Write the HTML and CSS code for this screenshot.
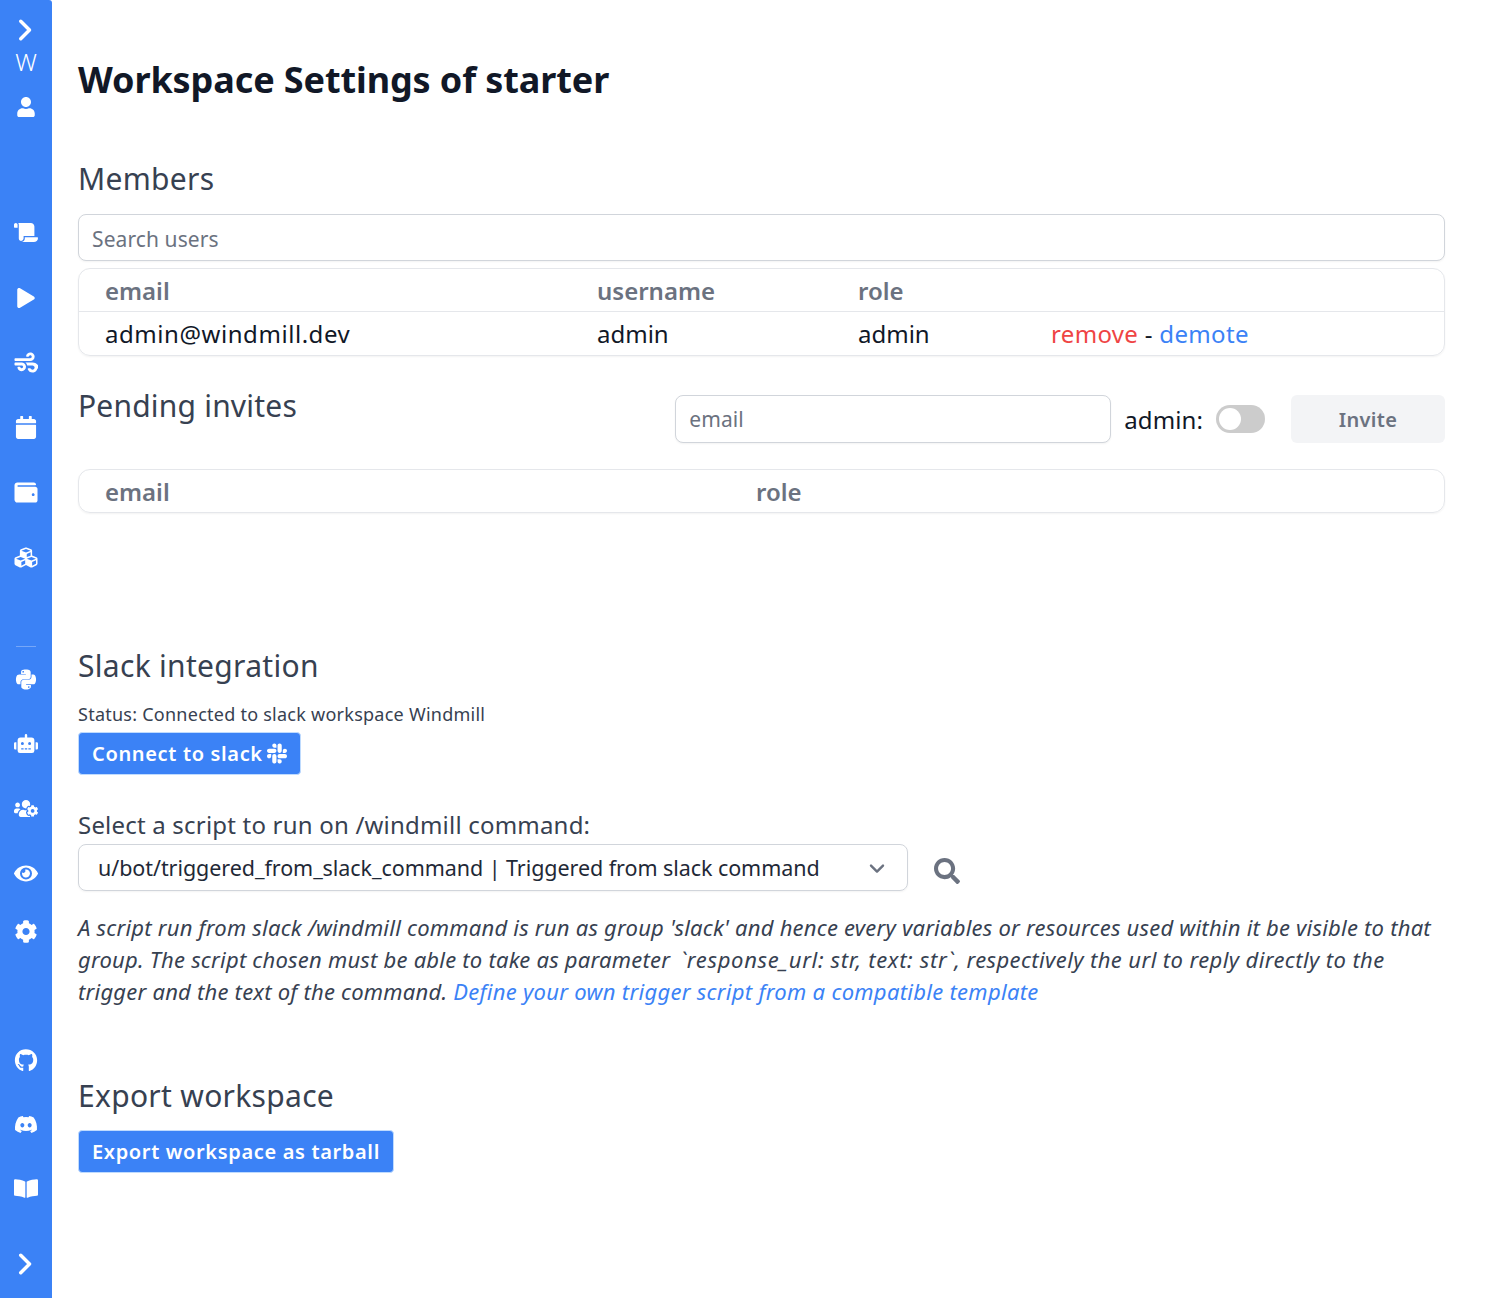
FILE: index.html
```html
<!DOCTYPE html>
<html lang="en">
<head>
    <meta charset="UTF-8">
    <meta name="viewport" content="width=device-width, initial-scale=1.0">
    <title>Workspace Settings of starter</title>
    <link rel="stylesheet" href="styles.css">
</head>
<body>
    <div class="layout">
        <!-- sidebar -->
        <nav class="sidebar">
            <div class="nav-top">
                <svg class="chevron" viewBox="0 0 24 24"><path d="M7.5 4.5l7.5 7.5-7.5 7.5"/></svg>
                <span class="nav-letter">W</span>
                <svg class="icon icon-small user-icon" viewBox="0 0 448 512"><path d="M224 256c70.7 0 128-57.3 128-128S294.7 0 224 0 96 57.3 96 128s57.3 128 128 128zm89.6 32h-16.7c-22.2 10.2-46.9 16-72.9 16s-50.6-5.8-72.9-16h-16.7C60.2 288 0 348.2 0 422.4V464c0 26.5 21.5 48 48 48h352c26.5 0 48-21.5 48-48v-41.6c0-74.2-60.2-134.4-134.4-134.4z"/></svg>
            </div>
            <div class="nav-group nav-main">
                <a class="nav-item"><svg class="icon" viewBox="0 0 640 512"><path d="M48 0C21.53 0 0 21.53 0 48v64c0 8.84 7.16 16 16 16h80V48C96 21.53 74.47 0 48 0zm208 412.57V352h288V96c0-52.94-43.06-96-96-96H111.59C121.74 13.41 128 29.92 128 48v368c0 38.87 34.66 69.65 74.75 63.12C234.22 474 256 444.46 256 412.57zM288 384v32c0 52.94-43.06 96-96 96h336c61.86 0 112-50.14 112-112 0-8.84-7.16-16-16-16H288z"/></svg></a>
                <a class="nav-item"><svg class="icon icon-small" viewBox="0 0 448 512"><path d="M424.4 214.7L72.4 6.6C43.8-10.3 0 6.1 0 47.9V464c0 37.5 40.7 60.1 72.4 41.3l352-208c31.4-18.5 31.5-64.1 0-82.6z"/></svg></a>
                <a class="nav-item"><svg class="icon" viewBox="0 0 512 512"><path d="M156.7 256H16c-8.8 0-16 7.2-16 16v32c0 8.8 7.2 16 16 16h142.2c15.9 0 30.8 10.9 33.4 26.6 3.3 20-12.1 37.4-31.6 37.4-14.1 0-26.1-9.2-30.4-21.9-2.1-6.3-8.6-10.1-15.2-10.1H81.6c-9.8 0-17.7 8.8-15.9 18.4 8.6 44.1 47.6 77.6 94.2 77.6 57.1 0 102.7-50.1 95.2-108.6C249 291 205.4 256 156.7 256zM16 224h336c59.7 0 106.8-54.8 93.8-116.7-7.6-36.2-36.9-65.5-73.1-73.1-55.4-11.6-105.1 24.9-114.9 75.5-1.9 9.6 6.1 18.3 15.8 18.3h32.8c6.7 0 13.1-3.8 15.2-10.1C325.9 105.2 337.9 96 352 96c19.4 0 34.9 17.4 31.6 37.4-2.6 15.7-17.4 26.6-33.4 26.6H16c-8.8 0-16 7.2-16 16v32c0 8.8 7.2 16 16 16zm384 32H243.7c19.3 16.6 33.2 38.8 39.8 64H400c26.5 0 48 21.5 48 48s-21.5 48-48 48c-17.9 0-33.3-9.9-41.6-24.4-2.9-5-8.7-7.6-14.5-7.6h-33.8c-10.9 0-19 10.8-15.3 21.1 17.8 50.6 70.5 84.8 129.4 72.3 41.2-8.7 75.1-41.6 84.7-82.7C576.3 356.7 505.4 256 400 256z"/></svg></a>
                <a class="nav-item"><svg class="icon" viewBox="0 0 448 512"><path d="M12 192h424c6.6 0 12 5.4 12 12v260c0 26.5-21.5 48-48 48H48c-26.5 0-48-21.5-48-48V204c0-6.6 5.4-12 12-12zm436-44v-36c0-26.5-21.5-48-48-48h-48V12c0-6.6-5.4-12-12-12h-40c-6.6 0-12 5.4-12 12v52H160V12c0-6.6-5.4-12-12-12h-40c-6.6 0-12 5.4-12 12v52H48C21.5 64 0 85.5 0 112v36c0 6.6 5.4 12 12 12h424c6.6 0 12-5.4 12-12z"/></svg></a>
                <a class="nav-item"><svg class="icon" viewBox="0 0 512 512"><path d="M461.2 128H80c-8.84 0-16-7.16-16-16s7.16-16 16-16h384c8.84 0 16-7.16 16-16 0-26.51-21.49-48-48-48H64C28.65 32 0 60.65 0 96v320c0 35.35 28.65 64 64 64h397.2c28.02 0 50.8-21.53 50.8-48V176c0-26.47-22.78-48-50.8-48zM416 336c-17.67 0-32-14.33-32-32s14.33-32 32-32 32 14.33 32 32-14.33 32-32 32z"/></svg></a>
                <a class="nav-item"><svg class="icon" viewBox="0 0 512 512"><path d="M488.6 250.2L392 214V105.5c0-15-9.3-28.4-23.4-33.7l-100-37.5c-8.1-3.1-17.1-3.1-25.3 0l-100 37.5c-14.1 5.3-23.4 18.7-23.4 33.7V214l-96.6 36.2C9.3 255.5 0 268.9 0 283.9V394c0 13.6 7.7 26.1 19.9 32.2l100 50c10.1 5.1 22.1 5.1 32.2 0l103.9-52 103.9 52c10.1 5.1 22.1 5.1 32.2 0l100-50c12.2-6.1 19.9-18.6 19.9-32.2V283.9c0-15-9.3-28.4-23.4-33.7zM358 214.8l-85 31.9v-68.2l85-37v73.3zM154 104.1l102-38.2 102 38.2v.6l-102 41.4-102-41.4v-.6zm84 291.1l-85 42.5v-79.1l85-38.8v75.4zm0-112l-102 41.4-102-41.4v-.6l102-38.2 102 38.2v.6zm240 112l-85 42.5v-79.1l85-38.8v75.4zm0-112l-102 41.4-102-41.4v-.6l102-38.2 102 38.2v.6z"/></svg></a>
            </div>
            <div class="nav-divider"></div>
            <div class="nav-group nav-admin">
                <a class="nav-item"><svg class="icon" viewBox="0 0 448 512"><path d="M439.8 200.5c-7.7-30.9-22.3-54.2-53.4-54.2h-40.1v47.4c0 36.8-31.2 67.8-66.8 67.8H172.7c-29.2 0-53.4 25-53.4 54.3v101.8c0 29 25.2 46 53.4 54.3 33.8 9.9 66.3 11.7 106.8 0 26.9-7.8 53.4-23.5 53.4-54.3v-40.7H226.2v-13.6h160.2c31.1 0 42.6-21.7 53.4-54.2 11.2-33.5 10.7-65.7 0-108.6zM286.2 404c11.1 0 20.1 9.1 20.1 20.3 0 11.3-9 20.4-20.1 20.4-11 0-20.1-9.2-20.1-20.4.1-11.3 9.1-20.3 20.1-20.3zM167.8 248.1h106.8c29.7 0 53.4-24.5 53.4-54.3V91.9c0-29-24.4-50.7-53.4-55.6-35.8-5.9-74.7-5.6-106.8.1-45.2 8-53.4 24.7-53.4 55.6v40.7h106.9v13.6h-147c-31.1 0-58.3 18.7-66.8 54.2-9.8 40.7-10.2 66.1 0 108.6 7.6 31.6 25.7 54.2 56.8 54.2H101v-48.8c0-35.3 30.5-66.4 66.8-66.4zm-6.7-142.6c-11.1 0-20.1-9.1-20.1-20.3.1-11.3 9-20.4 20.1-20.4 11 0 20.1 9.2 20.1 20.4s-9 20.3-20.1 20.3z"/></svg></a>
                <a class="nav-item"><svg class="icon" viewBox="0 0 640 512"><path d="M32,224H64V416H32A31.96166,31.96166,0,0,1,0,384V256A31.96166,31.96166,0,0,1,32,224Zm512-48V448a64.06328,64.06328,0,0,1-64,64H160a64.06328,64.06328,0,0,1-64-64V176a79.974,79.974,0,0,1,80-80H288V32a32,32,0,0,1,64,0V96H464A79.974,79.974,0,0,1,544,176ZM264,256a40,40,0,1,0-40,40A39.997,39.997,0,0,0,264,256Zm-8,128H192v32h64Zm96,0H288v32h64ZM456,256a40,40,0,1,0-40,40A39.997,39.997,0,0,0,456,256Zm-8,128H384v32h64ZM640,256V384a31.96166,31.96166,0,0,1-32,32H576V224h32A31.96166,31.96166,0,0,1,640,256Z"/></svg></a>
                <a class="nav-item"><svg class="icon" viewBox="0 0 640 512"><path d="M610.5 341.3c2.6-14.1 2.6-28.5 0-42.6l25.8-14.9c3-1.7 4.3-5.2 3.3-8.5-6.7-21.6-18.2-41.2-33.2-57.4-2.3-2.5-6-3.1-9-1.4l-25.8 14.9c-10.9-9.3-23.4-16.5-36.9-21.3v-29.8c0-3.4-2.4-6.4-5.7-7.1-22.3-5-45-4.8-66.2 0-3.3.7-5.7 3.7-5.7 7.1v29.8c-13.5 4.8-26 12-36.9 21.3l-25.8-14.9c-2.9-1.7-6.7-1.1-9 1.4-15 16.2-26.5 35.8-33.2 57.4-1 3.3.4 6.8 3.3 8.5l25.8 14.9c-2.6 14.1-2.6 28.5 0 42.6l-25.8 14.9c-3 1.7-4.3 5.2-3.3 8.5 6.7 21.6 18.2 41.1 33.2 57.4 2.3 2.5 6 3.1 9 1.4l25.8-14.9c10.9 9.3 23.4 16.5 36.9 21.3v29.8c0 3.4 2.4 6.4 5.7 7.1 22.3 5 45 4.8 66.2 0 3.3-.7 5.7-3.7 5.7-7.1v-29.8c13.5-4.8 26-12 36.9-21.3l25.8 14.9c2.9 1.7 6.7 1.1 9-1.4 15-16.2 26.5-35.8 33.2-57.4 1-3.3-.4-6.8-3.3-8.5l-25.8-14.9zM496 368.5c-26.8 0-48.5-21.8-48.5-48.5s21.8-48.5 48.5-48.5 48.5 21.8 48.5 48.5-21.7 48.5-48.5 48.5zM96 224c35.3 0 64-28.7 64-64s-28.7-64-64-64-64 28.7-64 64 28.7 64 64 64zm224 32c1.9 0 3.7-.5 5.6-.6 8.3-21.7 20.5-42.1 36.3-59.2 7.4-8 17.9-12.6 28.9-12.6 6.9 0 13.7 1.8 19.6 5.3l7.9 4.6c.8-.5 1.6-.9 2.4-1.4 7-14.6 11.2-30.8 11.2-48 0-61.9-50.1-112-112-112S208 82.1 208 144c0 61.9 50.1 112 112 112zm105.2 194.5c-2.3-1.2-4.6-2.6-6.8-3.9-8.2 4.8-15.3 9.8-27.5 9.8-10.9 0-21.4-4.6-28.9-12.6-18.3-19.8-32.3-43.9-40.2-69.6-10.7-34.5 24.9-49.7 25.8-50.3-.1-2.6-.1-5.2 0-7.8l-7.9-4.6c-3.8-2.2-7-5-9.8-8.1-3.3.2-6.5.6-9.8.6-24.6 0-47.6-6-68.5-16h-8.3C179.6 288 128 339.6 128 403.2V432c0 26.5 21.5 48 48 48h255.4c-3.7-6-6.2-12.8-6.2-20.3v-9.2zM173.1 274.6C161.5 263.1 145.6 256 128 256H64c-35.3 0-64 28.7-64 64v32c0 17.7 14.3 32 32 32h65.9c6.3-47.4 34.9-87.3 75.2-109.4z"/></svg></a>
                <a class="nav-item"><svg class="icon" viewBox="0 0 576 512"><path d="M572.52 241.4C518.29 135.59 410.93 64 288 64S57.68 135.64 3.48 241.41a32.35 32.35 0 0 0 0 29.19C57.71 376.41 165.07 448 288 448s230.32-71.64 284.52-177.41a32.35 32.35 0 0 0 0-29.19zM288 400a144 144 0 1 1 144-144 143.93 143.93 0 0 1-144 144zm0-240a95.31 95.31 0 0 0-25.31 3.79 47.85 47.85 0 0 1-66.9 66.9A95.78 95.78 0 1 0 288 160z"/></svg></a>
                <a class="nav-item nav-short"><svg class="icon" viewBox="0 0 512 512"><path d="M487.4 315.7l-42.6-24.6c4.3-23.2 4.3-47 0-70.2l42.6-24.6c4.9-2.8 7.1-8.6 5.5-14-11.1-35.6-30-67.8-54.7-94.6-3.8-4.1-10-5.1-14.8-2.3L380.8 110c-17.9-15.4-38.5-27.3-60.8-35.1V25.8c0-5.6-3.9-10.5-9.4-11.7-36.7-8.2-74.3-7.8-109.2 0-5.5 1.2-9.4 6.1-9.4 11.7V75c-22.2 7.9-42.8 19.8-60.8 35.1L88.7 85.5c-4.9-2.8-11-1.9-14.8 2.3-24.7 26.7-43.6 58.9-54.7 94.6-1.7 5.4.6 11.2 5.5 14L67.3 221c-4.3 23.2-4.3 47 0 70.2l-42.6 24.6c-4.9 2.8-7.1 8.6-5.5 14 11.1 35.6 30 67.8 54.7 94.6 3.8 4.1 10 5.1 14.8 2.3l42.6-24.6c17.9 15.4 38.5 27.3 60.8 35.1v49.2c0 5.6 3.9 10.5 9.4 11.7 36.7 8.2 74.3 7.8 109.2 0 5.5-1.2 9.4-6.1 9.4-11.7v-49.2c22.2-7.9 42.8-19.8 60.8-35.1l42.6 24.6c4.9 2.8 11 1.9 14.8-2.3 24.7-26.7 43.6-58.9 54.7-94.6 1.5-5.5-.7-11.3-5.6-14.1zM256 336c-44.1 0-80-35.9-80-80s35.9-80 80-80 80 35.9 80 80-35.9 80-80 80z"/></svg></a>
            </div>
            <div class="nav-group nav-links">
                <a class="nav-item"><svg class="icon" viewBox="0 0 496 512"><path d="M165.9 397.4c0 2-2.3 3.6-5.2 3.6-3.3 0-5.6-1.6-5.6-3.6 0-2 2.3-3.6 5.2-3.6 3-.3 5.6 1.3 5.6 3.6zm-31.1-4.5c-.7 2 1.3 4.3 4.3 4.9 2.6 1 5.6 0 6.2-2s-1.3-4.3-4.3-5.2c-2.6-.7-5.5.3-6.2 2.3zm44.2-1.7c-2.9.7-4.9 2.6-4.6 4.9.3 2 2.9 3.3 5.9 2.6 2.9-.7 4.9-2.6 4.6-4.6-.3-1.9-3-3.2-5.9-2.9zM244.8 8C106.1 8 0 113.3 0 252c0 110.9 69.8 205.8 169.5 239.2 12.8 2.3 17.3-5.6 17.3-12.1 0-6.2-.3-40.4-.3-61.4 0 0-70 15-84.7-29.8 0 0-11.4-29.1-27.8-36.6 0 0-22.9-15.7 1.6-15.4 0 0 24.9 2 38.6 25.8 21.9 38.6 58.6 27.5 72.9 20.9 2.3-16 8.8-27.1 16-33.7-55.9-6.2-112.3-14.3-112.3-110.5 0-27.5 7.6-41.3 23.6-58.9-2.6-6.5-11.1-33.3 2.6-67.9 20.9-6.5 69 27 69 27 20-5.6 41.5-8.5 62.8-8.5s42.8 2.9 62.8 8.5c0 0 48.1-33.6 69-27 13.7 34.7 5.2 61.4 2.6 67.9 16 17.7 25.8 31.5 25.8 58.9 0 96.5-58.9 104.2-114.8 110.5 9.2 7.9 17 22.9 17 46.4 0 33.7-.3 75.4-.3 83.6 0 6.5 4.6 14.4 17.3 12.1C428.2 457.8 496 362.9 496 252 496 113.3 383.5 8 244.8 8z"/></svg></a>
                <a class="nav-item"><svg class="icon" viewBox="0 0 640 512"><path d="M524.531,69.836a1.5,1.5,0,0,0-.764-.7A485.065,485.065,0,0,0,404.081,32.03a1.816,1.816,0,0,0-1.923.91,337.461,337.461,0,0,0-14.9,30.6,447.848,447.848,0,0,0-134.426,0,309.541,309.541,0,0,0-15.135-30.6,1.89,1.89,0,0,0-1.924-.91A483.689,483.689,0,0,0,116.085,69.137a1.712,1.712,0,0,0-.788.676C39.068,183.651,18.186,294.69,28.43,404.354a2.016,2.016,0,0,0,.765,1.375A487.666,487.666,0,0,0,176.02,479.918a1.9,1.9,0,0,0,2.063-.676A348.2,348.2,0,0,0,208.12,430.4a1.86,1.86,0,0,0-1.019-2.588,321.173,321.173,0,0,1-45.868-21.853,1.885,1.885,0,0,1-.185-3.126c3.082-2.309,6.166-4.711,9.109-7.137a1.819,1.819,0,0,1,1.9-.256c96.229,43.917,200.41,43.917,295.5,0a1.812,1.812,0,0,1,1.924.233c2.944,2.426,6.027,4.851,9.132,7.16a1.884,1.884,0,0,1-.162,3.126,301.407,301.407,0,0,1-45.89,21.83,1.875,1.875,0,0,0-1,2.611,391.055,391.055,0,0,0,30.014,48.815,1.864,1.864,0,0,0,2.063.7A486.048,486.048,0,0,0,610.7,405.729a1.882,1.882,0,0,0,.765-1.352C623.729,277.594,590.933,167.465,524.531,69.836ZM222.491,337.58c-28.972,0-52.844-26.587-52.844-59.239S193.056,219.1,222.491,219.1c29.665,0,53.306,26.82,52.843,59.239C275.334,310.993,251.924,337.58,222.491,337.58Zm195.38,0c-28.971,0-52.843-26.587-52.843-59.239S388.437,219.1,417.871,219.1c29.667,0,53.307,26.82,52.844,59.239C470.715,310.993,447.538,337.58,417.871,337.58Z"/></svg></a>
                <a class="nav-item"><svg class="icon" viewBox="0 0 576 512"><path d="M542.22 32.05c-54.8 3.11-163.72 14.43-230.96 55.59-4.64 2.84-7.27 7.89-7.27 13.17v363.87c0 11.55 12.63 18.85 23.28 13.49 69.18-34.82 169.23-44.32 218.7-46.92 16.89-.89 30.02-14.43 30.02-30.66V62.75c.01-17.71-15.35-31.74-33.77-30.7zM264.73 87.64C197.5 46.48 88.58 35.17 33.78 32.05 15.36 31.01 0 45.04 0 62.75V400.6c0 16.24 13.13 29.78 30.02 30.66 49.49 2.6 149.59 12.11 218.77 46.95 10.62 5.35 23.21-1.94 23.21-13.46V100.63c0-5.29-2.62-10.14-7.27-12.99z"/></svg></a>
            </div>
            <svg class="chevron chevron-bottom" viewBox="0 0 24 24"><path d="M7.5 4.5l7.5 7.5-7.5 7.5"/></svg>
        </nav>

        <!-- conteudo -->
        <main class="content">
            <h1 class="page-title">Workspace Settings of starter</h1>

            <h2 class="section-title members-title">Members</h2>
            <input class="text-input search-input" type="text" placeholder="Search users">
            <div class="table-box">
                <table class="data-table">
                    <thead>
                        <tr><th class="col-email">email</th><th class="col-username">username</th><th class="col-role">role</th><th></th></tr>
                    </thead>
                    <tbody>
                        <tr>
                            <td class="cell-email">admin@windmill.dev</td>
                            <td>admin</td>
                            <td>admin</td>
                            <td class="cell-actions"><a class="link-red">remove</a> - <a class="link-blue">demote</a></td>
                        </tr>
                    </tbody>
                </table>
            </div>

            <div class="invite-row">
                <h2 class="section-title invite-title">Pending invites</h2>
                <div class="invite-form">
                    <input class="text-input invite-input" type="text" placeholder="email">
                    <span class="admin-label">admin:</span>
                    <span class="toggle"><span class="toggle-knob"></span></span>
                    <button class="btn-invite">Invite</button>
                </div>
            </div>
            <div class="table-box invite-box">
                <table class="data-table">
                    <thead>
                        <tr><th class="col-invite-email">email</th><th>role</th></tr>
                    </thead>
                </table>
            </div>

            <h2 class="section-title slack-title">Slack integration</h2>
            <p class="status-text">Status: Connected to slack workspace Windmill</p>
            <button class="btn-primary">Connect to slack
                <svg class="slack-icon" viewBox="0 0 448 512"><path d="M94.12 315.1c0 25.9-21.16 47.06-47.06 47.06S0 341 0 315.1c0-25.9 21.16-47.06 47.06-47.06h47.06v47.06zm23.72 0c0-25.9 21.16-47.06 47.06-47.06s47.06 21.16 47.06 47.06v117.84c0 25.9-21.16 47.06-47.06 47.06s-47.06-21.16-47.06-47.06V315.1zm47.06-188.98c-25.9 0-47.06-21.16-47.06-47.06S139 32 164.9 32s47.06 21.16 47.06 47.06v47.06H164.9zm0 23.72c25.9 0 47.06 21.16 47.06 47.06s-21.16 47.06-47.06 47.06H47.06C21.16 243.96 0 222.8 0 196.9s21.16-47.06 47.06-47.06H164.9zm188.98 47.06c0-25.9 21.16-47.06 47.06-47.06 25.9 0 47.06 21.16 47.06 47.06s-21.16 47.06-47.06 47.06h-47.06V196.9zm-23.72 0c0 25.9-21.16 47.06-47.06 47.06-25.9 0-47.06-21.16-47.06-47.06V79.06c0-25.9 21.16-47.06 47.06-47.06 25.9 0 47.06 21.16 47.06 47.06V196.9zM283.1 385.88c25.9 0 47.06 21.16 47.06 47.06 0 25.9-21.16 47.06-47.06 47.06-25.9 0-47.06-21.16-47.06-47.06v-47.06h47.06zm0-23.72c-25.9 0-47.06-21.16-47.06-47.06 0-25.9 21.16-47.06 47.06-47.06h117.84c25.9 0 47.06 21.16 47.06 47.06 0 25.9-21.16 47.06-47.06 47.06H283.1z"/></svg>
            </button>

            <p class="select-label">Select a script to run on /windmill command:</p>
            <div class="select-row">
                <div class="select-box">
                    <span>u/bot/triggered_from_slack_command | Triggered from slack command</span>
                    <svg class="select-arrow" viewBox="0 0 20 20"><path d="M5 8l5 5 5-5"/></svg>
                </div>
                <svg class="search-icon" viewBox="0 0 512 512"><path d="M505 442.7L405.3 343c-4.5-4.5-10.6-7-17-7H372c27.6-35.3 44-79.7 44-128C416 93.1 322.9 0 208 0S0 93.1 0 208s93.1 208 208 208c48.3 0 92.7-16.4 128-44v16.3c0 6.4 2.5 12.5 7 17l99.7 99.7c9.4 9.4 24.6 9.4 33.9 0l28.3-28.3c9.4-9.4 9.4-24.6.1-34zM208 336c-70.7 0-128-57.2-128-128 0-70.7 57.2-128 128-128 70.7 0 128 57.2 128 128 0 70.7-57.2 128-128 128z"/></svg>
            </div>
            <p class="help-text">A script run from slack /windmill command is run as group 'slack' and hence every variables or resources used within it be visible to that group. The script chosen must be able to take as parameter <span class="help-code">`response_url: str, text: str`,</span> <span class="help-tail">respectively the url to reply directly to the</span><br>trigger and the text of the command. <a class="link-blue help-link">Define your own trigger script from a compatible template</a></p>

            <h2 class="section-title export-title">Export workspace</h2>
            <button class="btn-primary">Export workspace as tarball</button>
        </main>
    </div>
</body>
</html>
```

FILE: styles.css
```css
* {
    box-sizing: border-box;
}

body {
    margin: 0;
    font-family: "Noto Sans", sans-serif;
    color: #111827;
    background: #fff;
}

.layout {
    display: flex;
    min-height: 1298px;
}

/* sidebar */
.sidebar {
    width: 52px;
    flex-shrink: 0;
    height: 1298px;
    background: #3b82f6;
    border-top-right-radius: 3px;
    display: flex;
    flex-direction: column;
    align-items: center;
    color: #fff;
}

.nav-top {
    display: flex;
    flex-direction: column;
    align-items: center;
    padding-top: 16px;
}

.chevron {
    width: 28px;
    height: 28px;
    fill: none;
    stroke: #fff;
    stroke-width: 3;
    stroke-linecap: round;
    stroke-linejoin: round;
}

.chevron-bottom {
    margin-top: 29px;
}

.nav-letter {
    font-size: 24px;
    line-height: 30px;
    margin-top: 3px;
    font-weight: 300;
}

.user-icon {
    margin-top: 20px;
}

.nav-main {
    margin-top: 83px;
}

.nav-group {
    display: flex;
    flex-direction: column;
    align-items: center;
}

.nav-item {
    height: 65px;
    display: flex;
    align-items: center;
    justify-content: center;
}

.nav-admin .nav-item {
    height: 64.67px;
}

.nav-admin .nav-short {
    height: 51px;
}

.nav-links .nav-item {
    height: 64px;
}

.icon {
    width: 24px;
    height: 23px;
    fill: #fff;
}

.icon-small {
    width: 20px;
    height: 20px;
}

.nav-divider {
    width: 20px;
    height: 1px;
    background: rgba(255, 255, 255, 0.3);
    margin-top: 56px;
}

.nav-links {
    margin-top: 72px;
}

/* conteudo */
.content {
    flex: 1;
    padding: 56px 51px 0 26px;
    min-width: 0;
}

.page-title {
    margin: 0;
    font-size: 36px;
    line-height: 48px;
    font-weight: 700;
    letter-spacing: -0.1px;
}

.section-title {
    margin: 0;
    font-size: 30px;
    line-height: 40px;
    font-weight: 400;
    color: #374151;
    letter-spacing: 0.3px;
}

.members-title {
    margin-top: 55px;
}

.text-input {
    display: block;
    width: 100%;
    border: 1px solid #d1d5db;
    border-radius: 8px;
    box-shadow: 0 1px 2px rgba(0, 0, 0, 0.05);
    padding: 0 13px;
    font-family: inherit;
    font-size: 21px;
    letter-spacing: 0.1px;
    color: #111827;
    background: #fff;
}

.text-input::placeholder {
    color: #6b7280;
    opacity: 1;
}

.search-input {
    height: 47px;
    margin-top: 15px;
    padding-top: 2px;
}

.table-box {
    margin-top: 7px;
    border: 1px solid #e5e7eb;
    border-radius: 12px;
    box-shadow: 0 1px 2px rgba(0, 0, 0, 0.05);
    overflow: hidden;
}

.data-table {
    width: 100%;
    border-collapse: collapse;
    table-layout: fixed;
    font-size: 24px;
}

.data-table th {
    height: 42px;
    padding: 1px 0 0 26px;
    text-align: left;
    font-weight: 600;
    color: #6b7280;
}

.data-table td {
    height: 44px;
    padding: 1px 0 0 26px;
    border-top: 1px solid #e5e7eb;
}

.data-table .cell-email {
    letter-spacing: 0.55px;
}

.data-table .cell-actions {
    letter-spacing: 0.33px;
}

.col-email {
    width: 492px;
}

.col-username {
    width: 261px;
}

.col-role {
    width: 193px;
}

.col-invite-email {
    width: 651px;
}

.link-red {
    color: #ef4444;
}

.link-blue {
    color: #3b82f6;
}

.invite-row {
    display: flex;
    justify-content: space-between;
    align-items: flex-start;
    margin-top: 39px;
}

.invite-title {
    margin-top: -9px;
    letter-spacing: 0.2px;
}

.invite-form {
    display: flex;
    align-items: center;
}

.invite-input {
    width: 436px;
    height: 48px;
}

.admin-label {
    margin-left: 13px;
    font-size: 24px;
    letter-spacing: 0.1px;
}

.toggle {
    display: flex;
    align-items: center;
    width: 49px;
    height: 28px;
    margin-left: 13px;
    padding: 0 3px;
    border-radius: 14px;
    background: #ccc;
}

.toggle-knob {
    width: 22px;
    height: 22px;
    border-radius: 50%;
    background: #fff;
}

.btn-invite {
    width: 154px;
    height: 48px;
    margin-left: 26px;
    border: none;
    border-radius: 6px;
    background: #f3f4f6;
    color: #6b7280;
    font-family: inherit;
    font-size: 20px;
    font-weight: 600;
    letter-spacing: 0.3px;
}

.invite-box {
    margin-top: 26px;
}

.slack-title {
    margin-top: 133px;
}

.status-text {
    margin: 16px 0 0;
    font-size: 18px;
    line-height: 24px;
    color: #374151;
    letter-spacing: 0.25px;
}

.btn-primary {
    display: flex;
    align-items: center;
    gap: 4px;
    height: 43px;
    margin-top: 6px;
    padding: 0 13px;
    border: 1px solid #bfdbfe;
    border-radius: 4px;
    background: #3b82f6;
    color: #fff;
    font-family: inherit;
    font-size: 20px;
    font-weight: 600;
    letter-spacing: 0.65px;
}

.slack-icon {
    width: 20px;
    height: 23px;
    fill: #fff;
}

.select-label {
    margin: 34px 0 0;
    font-size: 24px;
    line-height: 32px;
    color: #374151;
    letter-spacing: 0.2px;
}

.select-row {
    display: flex;
    align-items: center;
    margin-top: 3px;
}

.select-box {
    display: flex;
    align-items: center;
    justify-content: space-between;
    width: 830px;
    height: 47px;
    padding: 0 18px 0 19px;
    border: 1px solid #d1d5db;
    border-radius: 8px;
    box-shadow: 0 1px 2px rgba(0, 0, 0, 0.05);
    font-size: 21.5px;
    letter-spacing: -0.06px;
    color: #1f2937;
}

.select-arrow {
    width: 24px;
    height: 24px;
    fill: none;
    stroke: #6b7280;
    stroke-width: 2;
    stroke-linecap: round;
    stroke-linejoin: round;
}

.search-icon {
    width: 26px;
    height: 26px;
    margin: 6px 0 0 26px;
    fill: #6b7280;
}

.help-text {
    margin: 20px 0 0;
    font-size: 22px;
    line-height: 32px;
    font-style: italic;
    color: #374151;
    letter-spacing: 0.22px;
}

.help-code {
    margin-left: 4px;
    letter-spacing: 0.67px;
}

.help-tail {
    letter-spacing: 0.4px;
}

.help-link {
    letter-spacing: 0.29px;
}

.export-title {
    margin-top: 69px;
}

.export-title + .btn-primary {
    margin-top: 14px;
}
```
